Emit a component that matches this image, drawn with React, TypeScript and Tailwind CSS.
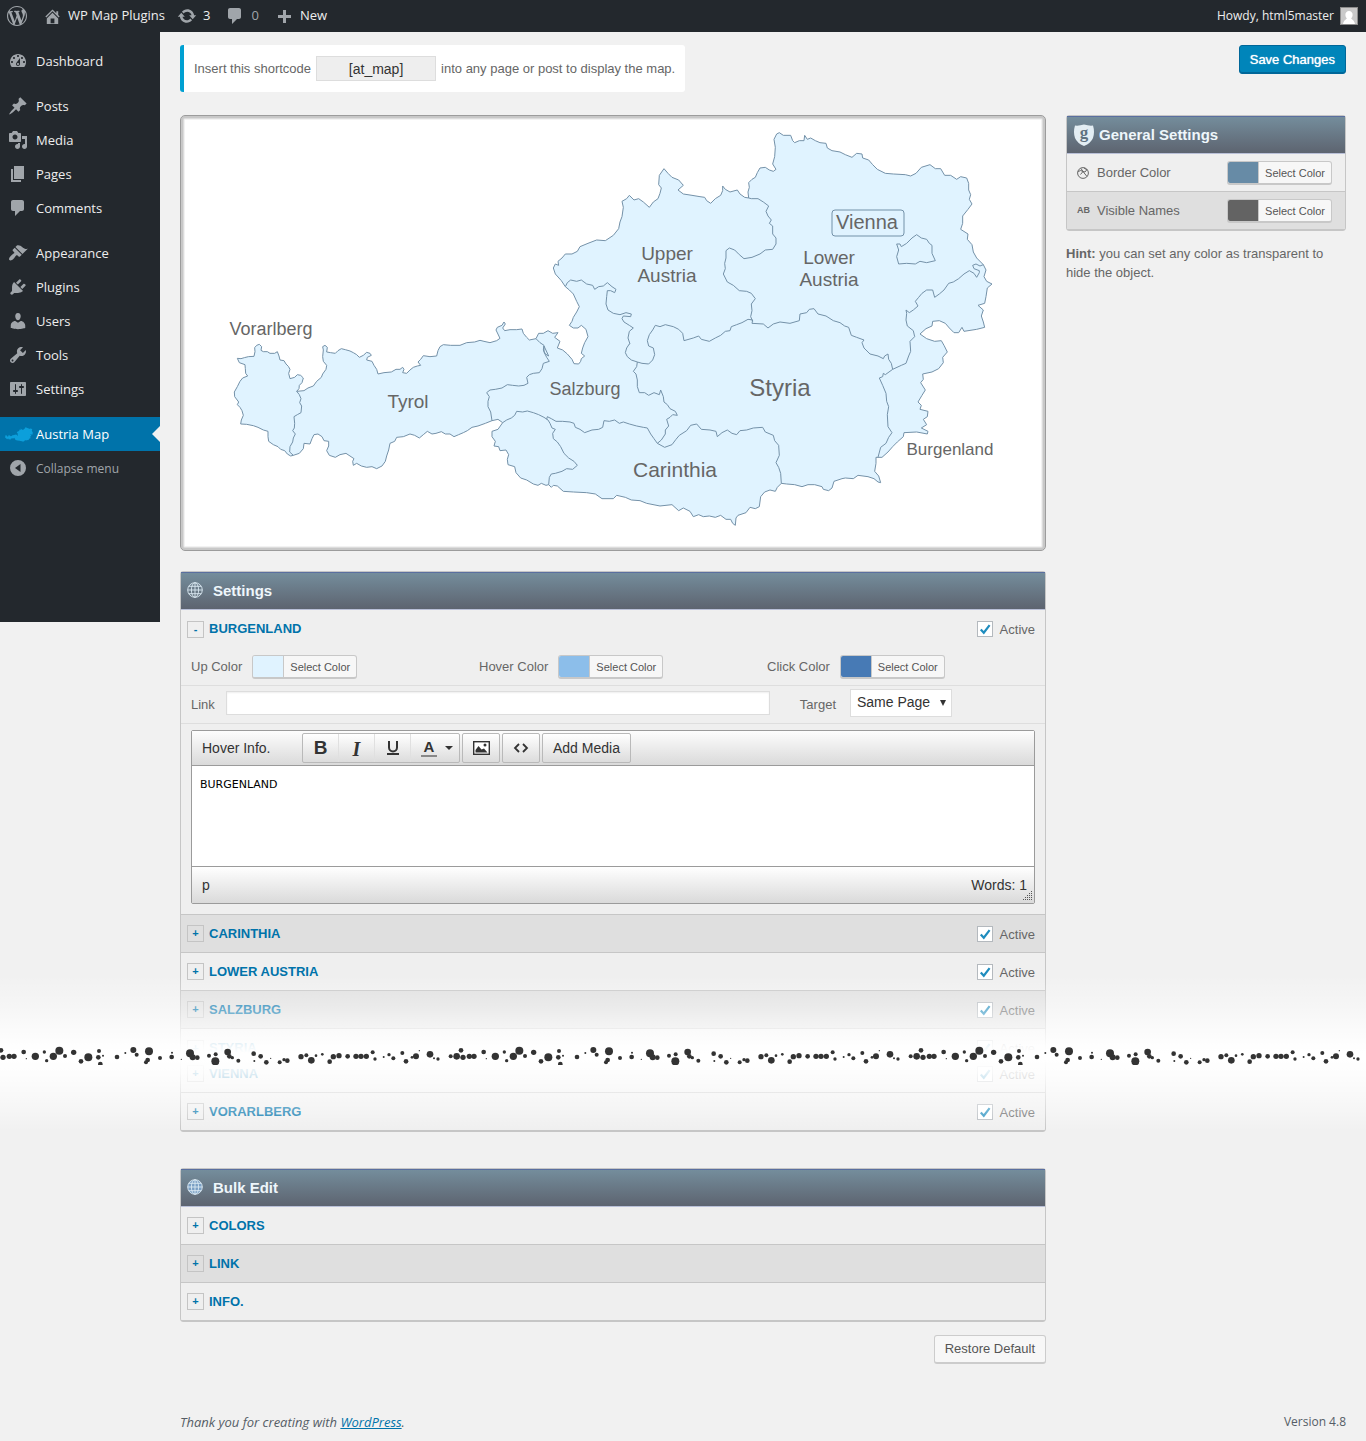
import type { ReactNode } from 'react';

const sans = 'font-["Liberation_Sans",Arial,sans-serif]';

type Point = [number, number];

// outline data is split in tiles, every tile has its own origin (units are 1/3 px)
const tile = (dx: number, dy: number, data: string): Point[] =>
	data.split(' ').map((pair) => {
		const [x, y] = pair.split(',').map(Number);
		return [x + dx, y + dy];
	});
const west = (data: string) => tile(0, 555, data);
const north = (data: string) => tile(900, 15, data);
const northEast = (data: string) => tile(1680, -15, data);
const south = (data: string) => tile(870, 675, data);
const southEast = (data: string) => tile(1680, 555, data);
const toPoints = (points: Point[]) => points.map((p) => p.join(',')).join(' ');

const outline = toPoints([
	...west(
		'172,175 183,176 193,173 205,170 222,169 225,155 224,143 230,136 238,133 245,140 243,151 250,155 262,155 270,160 284,160 292,155 297,168 300,180 312,182 318,192 325,199 330,208 326,220 330,236 344,232 352,224 362,226 370,234 366,248 358,256 357,266 350,274'
	),
	...west(
		'372,272 384,264 400,258 410,244 424,232 428,222 438,208 440,196 430,184 428,170 430,150 428,140 435,136 442,142 440,156 452,158 466,160 474,152 484,146 496,149 510,153 520,158 530,164 538,172 550,166 560,157 570,160 574,166 562,172 560,180 576,184 582,196 590,208 594,222 612,218 634,216 648,208 660,208 668,202 672,208 668,218 680,220 690,210 700,202 712,198 722,196 714,186 722,178 730,167 750,170 770,168 774,152 780,140 790,134 812,136 840,136 860,128 884,126 900,121 912,124 930,128 950,122'
	),
	...north('60,655 48,630 52,622 66,616 72,606 76,612 68,624 74,632 90,629 110,629 126,627 130,640 140,652 148,660 168,656'),
	...north(
		'176,640 190,640 204,632 218,640 234,638 224,652 240,664 232,684 248,690 262,702 276,718 282,731 296,732 302,724 304,716 314,708 304,700 308,684 314,668 324,650 318,628 304,616 294,624 280,624 268,616 276,604 280,592 290,576 298,560 290,544 280,522 268,510 256,500'
	),
	...north(
		'244,482 226,462 220,444 226,432 236,436 234,424 246,414 256,402 276,402 292,394 300,380 324,370 350,360 376,362 400,346 416,326 420,306 426,290 430,262 426,244 440,236 448,226 462,240 476,236 490,246 508,262 520,246 534,236 540,220 544,204 536,194 538,166 552,146 564,160 576,172 596,180 610,196 594,210 610,222 636,226 660,230 674,232 680,242 692,250 706,236 722,226 728,212 728,198 736,208 750,216 772,210 780,222 794,232 806,234'
	),
	...northEast(
		'24,246 28,232 26,218 36,208 46,202 52,188 60,174 76,172 88,180 100,184 108,178 98,162 104,140 106,112 102,88 110,72 118,68 130,76 152,76 158,92 164,98 178,92 192,92 194,76 202,88 212,84 226,92 240,98 258,100 262,114 276,122 300,126 316,134 336,142 350,130 366,132 368,144 386,150 398,164 412,178 436,190 460,192 496,194 512,198 528,190 544,172 570,164 586,176 602,176 614,196 632,196 650,208 662,200 680,204 686,220 686,240 692,254 688,268 696,282 684,298 668,318 668,340 662,358 684,372 682,388 696,404 700,426 710,444 730,464'
	),
	...northEast(
		'738,480 732,500 740,514 756,522 742,534 738,560 734,580 714,586 730,600 724,618 730,636 734,652 710,658 672,664 666,652 656,668 642,668 628,654 616,640 598,632 578,634 576,648 558,656 540,672'
	),
	...southEast(
		'560,116 584,124 604,122 612,136 622,156 608,172 610,188 596,206 576,216 548,222 550,238 542,248 556,270 546,286 534,306 544,316 540,328 564,334 562,350 550,358 560,374 544,384 564,394 562,402 530,396 492,398 490,410 472,426 458,440 444,456 426,472 408,472'
	),
	...southEast(
		'408,490 404,514 416,528 422,548 414,546 402,536 384,530 354,526 340,536 316,534 306,536 282,544 276,564 266,572 250,568 246,560 224,554 204,554 186,560 164,554 140,552 124,550 112,562 106,574 90,570 74,576 62,590 58,620 46,626 30,622 18,638'
	),
	...south(
		'804,526 798,534 796,556 788,550 782,538 768,538 752,526 736,532 718,528 700,530 686,524 670,530 660,514 640,504 626,512 606,494 570,498 530,490 510,482 484,480 466,472 440,466 430,476 396,476 376,462 350,458 310,456 280,454 262,438 250,436 244,442 236,434'
	),
	...south(
		'228,436 214,430 204,436 190,432 170,420 152,414 138,398 134,380 114,374 112,358 116,344 108,330 90,332 86,320 72,318 76,304 66,290 66,274 84,268 98,248 84,238 66,242'
	),
	...west(
		'916,370 894,378 876,382 862,392 850,398 836,404 822,410 810,402 796,402 784,395 768,400 756,402 742,394 730,404 718,414 704,406 690,402 670,410 650,412 644,424 630,430 626,450 620,468 616,484 606,498 590,506 576,500 560,502 544,498 530,490 520,496 518,484 522,476 510,468 498,460 480,464 466,472 448,466 440,452 446,438 446,424 432,422 426,410 414,402 402,404 396,416 390,432 372,430 370,446 358,460 340,466'
	),
	...west(
		'332,468 322,462 314,452 302,448 294,440 280,434 266,424 264,410 264,394 250,390 234,382 220,377 200,373 182,372 184,360 190,346 186,332 180,322 172,314 176,306 164,290 163,276 172,260 180,244 188,234 203,228 197,220 196,206 195,194 178,188'
	),
]);

const borders = [
	// Vorarlberg / Tyrol
	west('350,274 358,284 363,296 359,308 365,318 363,338 352,344 342,350 344,370 343,384 338,392 346,402 340,414 338,426 330,440 329,456 340,466'),
	// Tyrol / Salzburg
	[
		...north('168,656 180,668 192,676 190,690 196,702 206,708'),
		...south('222,18 222,36 230,52 238,64 220,70 216,86 208,98 190,100 178,104 170,112 174,130 162,136 146,138 128,136 112,134 96,144 76,148 60,150 50,158 58,170 54,184 54,200 62,216 66,242'),
	],
	// East Tyrol
	south('98,248 110,240 124,234 134,226 140,214 158,216 172,213 190,218 206,224 222,232 234,240 240,250 246,264 256,268 248,280 250,296 262,306 272,320 282,340 296,354 312,364 322,376 308,388 290,386 276,394 256,400 244,402 238,412 236,434'),
	// Salzburg / Carinthia
	south('230,238 232,230 244,236 258,244 278,244 300,246 312,250 316,262 330,268 344,278 366,270 386,268 398,262 402,242 418,244 434,240 448,250 460,246 478,252 500,258 520,262 532,264 542,282 552,296 562,310'),
	// Salzburg / Styria
	south('562,310 574,300 586,282 586,270 596,258 590,238 600,232 608,224 622,226 616,214 600,206 592,194 582,186 580,170 572,150 568,164 552,158 536,166 524,158 508,158 502,140 502,120 498,102 490,94 500,80 502,66'),
	// Salzburg / Upper Austria
	[
		...south('502,66 484,60 472,50 466,38 470,24 478,12'),
		...north('450,672 444,654 448,634 460,624 448,616 432,606 426,596 430,588 452,590 454,582 438,578 420,584 400,580 384,570 378,552 380,530 382,512 392,512 404,518 408,508 396,500 382,488 370,498 356,500 344,508 338,496 320,492 304,480 290,484 272,480 262,488 256,500'),
	],
	// Upper / Lower Austria
	north('806,234 814,236 834,236 850,246 866,258 858,274 864,288 874,300 868,310 878,318 878,342 888,354 888,372 878,388 856,390 840,402 816,412 792,416 778,404 764,390 748,384 738,392 738,414 734,430 736,446 730,462 742,486 760,496 778,512 800,514 814,520 826,536 814,552 816,572 812,590 818,604'),
	// Upper Austria / Styria
	[
		...north('818,600 804,598 786,608 770,614 754,620 750,632 736,634 722,646 706,654 688,664 664,658 656,648 640,654 612,662 608,640 596,628 580,620 556,614 540,620 526,616 518,630 508,644 502,662 506,678 520,684'),
		...south('554,44 548,60 536,72 516,70 502,66'),
	],
	// Styria / Lower Austria
	southEast('38,60 36,70 70,72 84,84 100,72 120,66 150,70 178,62 180,42 200,38 208,28 222,26 234,42 258,48 280,62 300,68 314,78 326,82 334,106 350,112 372,120 366,128 372,144 390,162 414,168 430,176 434,168 444,162 446,178 454,190 458,208'),
	// Lower Austria / Burgenland
	[
		...northEast('730,464 720,468 708,462 698,466 702,476 718,482 718,488 710,502 702,490 688,482 672,492 656,506 640,516 626,520 612,540 598,552 584,562 578,540 560,540 546,550 536,562 526,574 534,588 520,600 508,608 498,600'),
		...southEast('500,40 498,60 502,78 520,92 524,110 510,124 512,154 506,168 498,190 484,196 458,208'),
	],
	// Burgenland / Styria
	southEast('458,208 436,224 430,220 428,230 418,234 428,256 438,280 440,304 446,320 442,344 444,380 456,398 446,412 438,430 422,442 414,472'),
	// Styria / Carinthia
	[
		...southEast('124,550 122,520 116,502 108,488 118,466 116,436 104,422 100,406 76,396 68,382 40,384 20,390 0,392'),
		...south('800,284 786,280 772,270 756,278 742,290 738,274 720,270 694,268 680,252 662,256 650,272 628,286 618,298 606,314 584,322 562,310'),
	],
	// Vienna
	northEast('484,410 500,400 516,384 530,374 544,384 560,388 568,400 576,406 576,430 586,452 560,458 540,454 526,462 500,460 476,462 470,440 476,420 470,402 480,402 484,410'),
].map(toPoints);

// x, y, radius (1/3 px)
const dots = [
	[3, 16, 7], [9, 37, 8], [28, 34, 8], [42, 34, 8], [71, 21, 7], [79, 41, 2], [106, 34, 11], [133, 21, 5],
	[140, 47, 5], [160, 34, 11], [178, 17, 12], [195, 33, 6], [221, 22, 8], [243, 49, 7], [265, 37, 12],
	[297, 18, 6], [295, 37, 7], [301, 57, 7], [309, 32, 3], [351, 36, 7], [376, 24, 3], [400, 15, 9],
	[410, 29, 6], [447, 19, 12], [443, 45, 7], [438, 52, 6], [480, 39, 6], [515, 36, 7], [516, 23, 3],
	[544, 43, 2], [570, 25, 12], [578, 37, 9], [592, 38, 7], [627, 32, 6], [647, 28, 6], [646, 49, 12],
	[683, 21, 10], [688, 34, 7], [697, 38, 5], [715, 47, 6], [761, 26, 7], [763, 48, 3], [782, 34, 7],
	[799, 52, 7], [812, 40, 2], [839, 52, 6], [852, 44, 5], [862, 47, 7], [903, 35, 8], [919, 31, 6],
	[934, 46, 10], [948, 32, 4], [967, 28, 4], [989, 50, 7], [1000, 35, 8], [1017, 32, 8], [1043, 34, 7],
	[1068, 34, 8], [1083, 34, 8], [1099, 34, 8], [1118, 22, 6], [1125, 42, 5], [1151, 36, 3], [1167, 29, 5],
	[1180, 40, 6], [1207, 24, 6], [1218, 49, 7], [1236, 37, 4], [1248, 34, 9], [1258, 17, 2], [1290, 28, 10],
	[1302, 40, 3], [1314, 42, 5], [1352, 34, 6], [1370, 34, 10],
];

const icons = {
	wordpress:
		'M20 10c0-5.51-4.49-10-10-10C4.48 0 0 4.49 0 10c0 5.52 4.48 10 10 10 5.51 0 10-4.48 10-10zM7.78 15.37L4.37 6.22c.55-.02 1.17-.08 1.17-.08.5-.06.44-1.13-.06-1.11 0 0-1.45.11-2.37.11-.18 0-.37 0-.58-.01C4.12 2.69 6.87 1.11 10 1.11c2.33 0 4.45.87 6.05 2.34-.68-.11-1.65.39-1.65 1.58 0 .74.45 1.36.9 2.1.35.61.55 1.36.55 2.46 0 1.49-1.4 5-1.4 5l-3.03-8.37c.54-.02.82-.17.82-.17.5-.05.44-1.25-.06-1.22 0 0-1.44.12-2.38.12-.87 0-2.33-.12-2.33-.12-.5-.03-.56 1.2-.06 1.22l.92.08 1.26 3.41zM17.41 10c.24-.64.74-1.87.43-4.25.7 1.29 1.05 2.71 1.05 4.25 0 3.29-1.73 6.24-4.4 7.78.97-2.59 1.94-5.2 2.92-7.78zM6.1 18.09C3.12 16.65 1.11 13.53 1.11 10c0-1.3.23-2.48.72-3.59C3.25 10.3 4.67 14.2 6.1 18.09zm4.03-6.63l2.58 6.98c-.86.29-1.76.45-2.71.45-.79 0-1.57-.11-2.29-.33.81-2.38 1.62-4.74 2.42-7.1z',
	home: 'M16 8.5l1.53 1.53-1.06 1.06L10 4.6l-6.47 6.49-1.06-1.06L10 2.5l4 4v-2h2v4zm-6-2.46l6 5.99V18H4v-5.97zM12 17v-5H8v5h4z',
	update:
		'M10.2 3.28c3.53 0 6.43 2.61 6.92 6h2.08l-3.5 4-3.5-4h2.32c-.45-1.97-2.21-3.45-4.32-3.45-1.45 0-2.73.71-3.54 1.78L4.95 5.66C6.23 4.2 8.11 3.28 10.2 3.28zm-.4 13.44c-3.52 0-6.43-2.61-6.92-6H.8l3.5-4c1.17 1.33 2.33 2.67 3.5 4H5.48c.45 1.97 2.21 3.45 4.32 3.45 1.45 0 2.73-.71 3.54-1.78l1.71 1.95c-1.28 1.46-3.15 2.38-5.25 2.38z',
	plus: 'M17 9v3h-5v5H9v-5H4V9h5V4h3v5h5z',
	dashboard:
		'M3.76 16h12.48c1.1-1.37 1.76-3.11 1.76-5 0-4.42-3.58-8-8-8s-8 3.58-8 8c0 1.89.66 3.63 1.76 5zM10 4c.55 0 1 .45 1 1s-.45 1-1 1-1-.45-1-1 .45-1 1-1zM6 6c.55 0 1 .45 1 1s-.45 1-1 1-1-.45-1-1 .45-1 1-1zm8 0c.55 0 1 .45 1 1s-.45 1-1 1-1-.45-1-1 .45-1 1-1zm-5.37 5.55L12 7v6c0 1.1-.9 2-2 2s-2-.9-2-2c0-.57.24-1.08.63-1.45zM4 10c.55 0 1 .45 1 1s-.45 1-1 1-1-.45-1-1 .45-1 1-1zm12 0c.55 0 1 .45 1 1s-.45 1-1 1-1-.45-1-1 .45-1 1-1zm-5 3c0-.55-.45-1-1-1s-1 .45-1 1 .45 1 1 1 1-.45 1-1z',
	post: 'M10.44 3.02l1.82-1.82 6.36 6.35-1.83 1.82c-1.05-.68-2.48-.57-3.41.36l-.75.75c-.92.93-1.04 2.35-.35 3.41l-1.83 1.82-2.41-2.41-2.8 2.79c-.42.42-3.38 2.71-3.8 2.29s1.86-3.39 2.28-3.81l2.79-2.79L4.1 9.36l1.83-1.82c1.05.69 2.48.57 3.4-.36l.75-.75c.93-.92 1.05-2.35.36-3.41z',
	media:
		'M13 11V4c0-.55-.45-1-1-1h-1.67L9 1H5L3.67 3H2c-.55 0-1 .45-1 1v7c0 .55.45 1 1 1h10c.55 0 1-.45 1-1zM7 4.5c1.38 0 2.5 1.12 2.5 2.5S8.38 9.5 7 9.5 4.5 8.38 4.5 7 5.62 4.5 7 4.5zM14 6h5v10.5c0 1.38-1.12 2.5-2.5 2.5S14 17.88 14 16.5s1.12-2.5 2.5-2.5c.17 0 .34.02.5.05V9h-3V6zm-4 8.05V13h2v3.5c0 1.38-1.12 2.5-2.5 2.5S7 17.88 7 16.5 8.12 14 9.5 14c.17 0 .34.02.5.05z',
	page: 'M6 15V2h10v13H6zm-1 1h8v2H3V5h2v11z',
	comments: 'M5 2h9c1.1 0 2 .9 2 2v7c0 1.1-.9 2-2 2h-2l-5 5v-5H5c-1.1 0-2-.9-2-2V4c0-1.1.9-2 2-2z',
	appearance:
		'M14.48 11.06L7.41 3.99l1.5-1.5c.5-.56 2.3-.47 3.51.32 1.21.8 1.43 1.28 2.91 2.1 1.18.64 2.45 1.26 4.45.85zm-.71.71L6.7 4.7 4.93 6.47c-.39.39-.39 1.02 0 1.41l1.06 1.06c.39.39.39 1.03 0 1.42-.6.6-1.43 1.11-2.21 1.69-.35.26-.7.53-1.01.84C1.43 14.23.4 16.08 1.4 17.07c.99 1 2.84-.03 4.18-1.36.31-.31.58-.66.85-1.02.57-.78 1.08-1.61 1.69-2.21.39-.39 1.02-.39 1.41 0l1.06 1.06c.39.39 1.02.39 1.41 0z',
	plugins:
		'M13.11 4.36L9.87 7.6 8 5.73l3.24-3.24c.35-.34 1.05-.2 1.56.32.52.51.66 1.21.31 1.55zm-8 1.77l.91-1.12 9.01 9.01-1.19.84c-.71.71-2.63 1.16-3.82 1.16H6.14L4.9 17.26c-.59.59-1.54.59-2.12 0-.59-.58-.59-1.53 0-2.12l1.24-1.24v-3.88c0-1.13.4-3.19 1.09-3.89zm7.26 3.97l3.24-3.24c.34-.35 1.04-.21 1.55.31.52.51.66 1.21.31 1.55l-3.24 3.25z',
	users:
		'M10 9.25c-2.27 0-2.73-3.44-2.73-3.44C7 4.02 7.82 2 9.97 2c2.16 0 2.98 2.02 2.71 3.81 0 0-.41 3.44-2.68 3.44zm0 2.57L12.72 10c2.39 0 4.52 2.33 4.52 4.53v2.49s-3.65 1.13-7.24 1.13c-3.65 0-7.24-1.13-7.24-1.13v-2.49c0-2.25 1.94-4.48 4.47-4.48z',
	tools: 'M16.68 9.77c-1.34 1.34-3.3 1.67-4.95.99l-5.41 6.52c-.99.99-2.59.99-3.58 0s-.99-2.59 0-3.57l6.52-5.42c-.68-1.65-.35-3.61.99-4.95 1.28-1.28 3.12-1.62 4.72-1.06l-2.89 2.89 2.82 2.82 2.86-2.87c.53 1.58.18 3.39-1.08 4.65zM3.81 16.21c.4.39 1.04.39 1.43 0 .4-.4.4-1.04 0-1.43-.39-.4-1.03-.4-1.43 0-.39.39-.39 1.03 0 1.43z',
	settings:
		'M18 16V4c0-.55-.45-1-1-1H3c-.55 0-1 .45-1 1v12c0 .55.45 1 1 1h14c.55 0 1-.45 1-1zM8 11h1c.55 0 1 .45 1 1s-.45 1-1 1H8v1.5c0 .28-.22.5-.5.5s-.5-.22-.5-.5V13H6c-.55 0-1-.45-1-1s.45-1 1-1h1V5.5c0-.28.22-.5.5-.5s.5.22.5.5V11zm5-2h-1c-.55 0-1-.45-1-1s.45-1 1-1h1V5.5c0-.28.22-.5.5-.5s.5.22.5.5V7h1c.55 0 1 .45 1 1s-.45 1-1 1h-1v5.5c0 .28-.22.5-.5.5s-.5-.22-.5-.5V9z',
	collapse: 'M10 2a8 8 0 1 0 0 16 8 8 0 0 0 0-16zm2.5 4v8L7 10z',
};

type IconName = keyof typeof icons;

const Icon = ({ name, className = 'size-5 text-[#a0a5aa]' }: { name: IconName; className?: string }) => (
	<svg viewBox="0 0 20 20" className={className} fill="currentColor" fillRule="evenodd" aria-hidden="true">
		<path d={icons[name]} />
	</svg>
);

const menu: { label: string; icon: IconName }[][] = [
	[{ label: 'Dashboard', icon: 'dashboard' }],
	[
		{ label: 'Posts', icon: 'post' },
		{ label: 'Media', icon: 'media' },
		{ label: 'Pages', icon: 'page' },
		{ label: 'Comments', icon: 'comments' },
	],
	[
		{ label: 'Appearance', icon: 'appearance' },
		{ label: 'Plugins', icon: 'plugins' },
		{ label: 'Users', icon: 'users' },
		{ label: 'Tools', icon: 'tools' },
		{ label: 'Settings', icon: 'settings' },
	],
];

const AdminBar = () => (
	<header className="flex h-8 items-center justify-between bg-[#23282d] pr-2 pl-[7px] text-[13px] text-[#eee]">
		<nav className="flex items-center">
			<a href="#wp" aria-label="About WordPress" className="mr-4">
				<Icon name="wordpress" />
			</a>
			<a href="#site" className="mr-3 flex items-center gap-[6px]">
				<Icon name="home" className="size-[19px] text-[#a0a5aa]" />
				WP Map Plugins
			</a>
			<a href="#updates" className="mr-[15px] flex items-center gap-[6px]">
				<Icon name="update" />3
			</a>
			<a href="#comments" className="mr-[15px] flex items-center gap-[6px] text-[#a0a5aa]">
				<Icon name="comments" />0
			</a>
			<a href="#new" className="flex items-center gap-[6px]">
				<Icon name="plus" />
				New
			</a>
		</nav>
		<a href="#profile" className="flex items-center gap-[6px] text-[12px]">
			Howdy, html5master
			<svg viewBox="0 0 18 18" className="size-[18px]" aria-hidden="true">
				<rect width="18" height="18" fill="#8c8c8c" />
				<rect x="1" y="1" width="16" height="16" fill="#c9c9c9" />
				<path d="M9 4a3.6 3.6 0 0 1 3.6 4c0 1.6-.8 2.6-1.4 3.2 0 1.2 3 1.4 3.8 5.800H3c.8-4.400 3.800-4.600 3.800-5.800C6.200 10.600 5.400 9.600 5.400 8A3.600 3.600 0 0 1 9 4z" fill="#fff" />
			</svg>
		</a>
	</header>
);

const Sidebar = () => (
	<nav className="min-h-[590px] w-40 shrink-0 self-start bg-[#23282d] pt-3 text-[13px] text-[#eee]">
		{menu.map((group) => (
			<ul key={group[0].label} className="mb-[11px]">
				{group.map(({ label, icon }) => (
					<li key={label}>
						<a href={`#${label}`} className="flex h-[34px] items-center gap-2 pl-2">
							<Icon name={icon} />
							<span className="pt-[2px]">{label}</span>
						</a>
					</li>
				))}
			</ul>
		))}
		<a href="#map" className="relative flex h-[34px] items-center gap-[3px] bg-[#0073aa] pl-[5px] text-white">
			<svg viewBox="160 40 2280 1200" className="h-[15px] w-7" aria-hidden="true">
				<polygon points={outline} fill="#0c9fdb" />
			</svg>
			<span className="pt-[2px]">Austria Map</span>
			<span className="absolute top-[9px] right-0 border-y-8 border-r-8 border-y-transparent border-r-[#f1f1f1]" />
		</a>
		<button type="button" className="flex h-[34px] w-full items-center gap-2 pl-2 text-[12px] text-[#a0a5aa]">
			<Icon name="collapse" />
			<span className="pt-[2px]">Collapse menu</span>
		</button>
	</nav>
);

const AustriaMap = () => (
	<div className="mb-5 rounded-[5px] border border-[#9c9c9c] bg-white shadow-[inset_0_0_0_2px_#c8c8c8,inset_0_0_0_3px_#dcdcdc,inset_0_0_0_4px_#f2f2f2]">
		<svg viewBox="1 1 864 434" className={`block w-full ${sans}`} fill="#666">
			<g transform="scale(0.33333)" stroke="#7391a8" strokeWidth="3" strokeLinejoin="round" fill="none">
				<polygon points={outline} fill="#e0f3ff" />
				{borders.map((points) => (
					<polyline key={points} points={points} />
				))}
			</g>
			<rect x="652" y="95" width="72" height="26" rx="3" fill="none" stroke="#7391a8" />
			<g textAnchor="middle" fontSize="18">
				<text x="91" y="220">Vorarlberg</text>
				<text x="228" y="293" fontSize="19">Tyrol</text>
				<text x="405" y="280">Salzburg</text>
				<text x="487" y="145" fontSize="19">Upper</text>
				<text x="487" y="167" fontSize="19">Austria</text>
				<text x="649" y="149" fontSize="19">Lower</text>
				<text x="649" y="171" fontSize="19">Austria</text>
				<text x="687" y="114" fontSize="20">Vienna</text>
				<text x="600" y="281" fontSize="24">Styria</text>
				<text x="495" y="362" fontSize="21">Carinthia</text>
				<text x="770" y="340" fontSize="17">Burgenland</text>
			</g>
		</svg>
	</div>
);

const Panel = ({ title, icon, children }: { title: string; icon: ReactNode; children: ReactNode }) => (
	<section className="rounded-[3px] border border-[#c6c6c6] bg-[#efefef]">
		<h2 className="flex h-[38px] items-center border-t border-b border-t-[#5a6f9f] border-b-[#b9c0d8] bg-linear-to-b from-[#748d9c] to-[#5d6470] pl-[6px] text-[15px] font-bold text-[#eef6fb]">
			{icon}
			{title}
		</h2>
		{children}
	</section>
);

const Globe = ({ fill = 'none' }: { fill?: string }) => (
	<svg viewBox="0 0 16 16" className="mr-[10px] mb-[2px] size-4" fill="none" stroke="#dbeaf3" strokeWidth="0.900" aria-hidden="true">
		<circle cx="8" cy="8" r="7.300" fill={fill} />
		<ellipse cx="8" cy="8" rx="3.600" ry="7.300" />
		<path d="M8 .7v14.600M.7 8h14.600M1.800 4.300h12.400M1.800 11.700h12.400" />
	</svg>
);

const ColorButton = ({ color }: { color: string }) => (
	<button type="button" className="flex h-6 rounded-[3px] border border-b-2 border-[#c8c8c8] bg-[#f7f7f7] text-[11px] leading-[22px] text-[#555]">
		<span className="h-full w-[31px] rounded-l-[2px] border-r border-[#c8c8c8]" style={{ backgroundColor: color }} />
		<span className="px-[6px]">Select Color</span>
	</button>
);

const ActiveBox = () => (
	<label className="flex items-center gap-[7px] text-[13px] text-[#666]">
		<span className="grid size-4 place-items-center">
			<input type="checkbox" defaultChecked className="peer col-start-1 row-start-1 size-4 appearance-none border border-[#b4b9be] bg-white" />
			<svg viewBox="0 0 16 16" className="pointer-events-none invisible col-start-1 row-start-1 size-4 peer-checked:visible" aria-hidden="true">
				<path d="M3.800 8.400 6.800 11.700 12.600 4.200" fill="none" stroke="#1e8cbe" strokeWidth="2.200" />
			</svg>
		</span>
		<span className="pt-[2px]">Active</span>
	</label>
);

type RowProps = { name: string; open?: boolean; active?: boolean; className?: string };

const Row = ({ name, open = false, active = true, className = '' }: RowProps) => (
	<div className={`flex h-[38px] items-center justify-between pr-[10px] pl-[6px] ${className}`}>
		<button type="button" aria-expanded={open} className="flex items-center gap-[5px] text-[13px] font-bold text-[#0073aa]">
			<span className="flex size-[17px] items-center justify-center border border-[#c4c4c4] text-[11px]">{open ? '-' : '+'}</span>
			{name}
		</button>
		{active && <ActiveBox />}
	</div>
);

const line = 'border-b border-[#c6c6c6]';

const toolClass = 'flex h-[30px] items-center justify-center rounded-[2px] border border-[#b9b9b9] bg-linear-to-b from-white to-[#dcdcdc]';

const Editor = () => (
	<div className="mx-[10px] mt-[6px] mb-[10px] rounded-[2px] border border-[#9b9b9b] text-[14px] text-[#333]">
		<div className="flex h-[35px] items-center gap-[2px] border-b border-[#9b9b9b] bg-linear-to-b from-[#fdfdfd] to-[#dadada] pl-[10px]">
			<label htmlFor="hover-info" className="w-[98px]">
				Hover Info.
			</label>
			<div className="flex h-[30px] rounded-[2px] border border-[#b9b9b9] bg-linear-to-b from-white to-[#dcdcdc] text-[19px]">
				<button type="button" className="w-9 border-r border-[#e0e0e0] font-bold">B</button>
				<button type="button" className='w-9 border-r border-[#e0e0e0] font-["Liberation_Serif",serif] text-[20px] font-bold italic'>I</button>
				<button type="button" className="flex w-9 items-center justify-center border-r border-[#e0e0e0]" aria-label="Underline">
					<svg viewBox="0 0 14 16" className="h-4 w-[14px]" fill="none" stroke="#333" strokeWidth="2" aria-hidden="true">
						<path d="M3 1v6.500a4 4 0 0 0 8 0V1M1 14h12" />
					</svg>
				</button>
				<button type="button" className="flex w-12 items-center justify-center gap-2 pl-1 text-[15px] font-bold" aria-label="Text color">
					<span className="border-b-2 border-[#888] px-[3px] leading-4">A</span>
					<span className="border-x-4 border-t-4 border-x-transparent border-t-[#333]" />
				</button>
			</div>
			<button type="button" className={`w-[38px] ${toolClass}`} aria-label="Insert image">
				<svg viewBox="0 0 17 14" className="h-[14px] w-[17px]" aria-hidden="true">
					<rect x="0.700" y="0.700" width="15.600" height="12.600" fill="#fff" stroke="#333" strokeWidth="1.400" />
					<path d="M2.500 11.500V9l3-4 3 3.500 2.500-1 3.500 4z" fill="#333" />
					<circle cx="12" cy="4" r="1.500" fill="#333" />
				</svg>
			</button>
			<button type="button" className={`w-[38px] ${toolClass}`} aria-label="Source code">
				<svg viewBox="0 0 16 10" className="h-[10px] w-4" fill="none" stroke="#333" strokeWidth="1.800" aria-hidden="true">
					<path d="M6 1 2 5l4 4M10 1l4 4-4 4" />
				</svg>
			</button>
			<button type="button" className={`px-[10px] ${toolClass}`}>Add Media</button>
		</div>
		<textarea
			id="hover-info"
			defaultValue="BURGENLAND"
			className='block h-[101px] w-full resize-none border-b border-[#9b9b9b] bg-white px-2 py-[11px] font-["DejaVu_Sans",sans-serif] text-[11px] leading-4 text-black'
		/>
		<div className="flex h-9 items-center justify-between bg-linear-to-b from-white to-[#dadada] pr-[2px] pl-[10px]">
			p
			<span className="flex h-full items-center">
				Words: 1
				<svg viewBox="0 0 9 9" className="mb-[3px] -ml-1 size-[9px] self-end" stroke="#555" strokeDasharray="1 1" aria-hidden="true">
					<path d="M8 .5h1M6 2.500h3M4 4.500h5M2 6.500h7M0 8.500h9" />
				</svg>
			</span>
		</div>
	</div>
);

// fades the rows out and draws the torn edge over them
const Tear = () => (
	<div className="relative h-0">
		<div className="pointer-events-none absolute -top-20 -left-[181px] h-[156px] w-screen bg-[linear-gradient(to_bottom,transparent,rgba(255,255,255,.4)_34px,rgba(255,255,255,.92)_70px,white_78px,white_84px,rgba(255,255,255,.88)_98px,rgba(255,255,255,.35)_136px,transparent)] pt-[70px]">
			<svg className="h-5 w-full" fill="#333" aria-hidden="true">
				<g transform="scale(0.33333)">
					{[0, 1380, 2760].map((shift) =>
						dots.map(([x, y, r]) => <circle key={`${shift}-${x}-${y}`} cx={x + shift} cy={y} r={r} />)
					)}
				</g>
			</svg>
		</div>
	</div>
);

const colors = [
	{ label: 'Up Color', color: '#e0f3ff' },
	{ label: 'Hover Color', color: '#8cbeea' },
	{ label: 'Click Color', color: '#477ab5' },
];

const RegionSettings = () => (
	<Panel title="Settings" icon={<Globe />}>
		<Row name="BURGENLAND" open />
		<div className="grid h-[38px] grid-cols-3 border-b border-[#dedede] text-[13px] text-[#666]">
			{colors.map(({ label, color }) => (
				<div key={label} className="flex items-center gap-[10px] pl-[10px]">
					{label}
					<ColorButton color={color} />
				</div>
			))}
		</div>
		<div className="flex h-[38px] items-center border-b border-[#dedede] px-[10px] text-[13px] text-[#666]">
			<label htmlFor="link" className="mr-[11px]">Link</label>
			<input id="link" type="text" className="mr-[30px] mb-1 h-6 min-w-0 flex-1 border border-[#ddd] bg-white px-2 shadow-[inset_0_1px_2px_rgba(0,0,0,.07)]" />
			<label htmlFor="target" className="mr-[14px]">Target</label>
			<span className="relative mr-[83px] mb-1">
				<select id="target" className="h-7 w-[102px] appearance-none border border-[#ddd] bg-white pl-[6px] text-[14px] text-[#333]">
					<option>Same Page</option>
					<option>New Page</option>
				</select>
				<span className="pointer-events-none absolute top-[11px] right-[6px] border-x-[3px] border-t-[6px] border-x-transparent border-t-[#333]" />
			</span>
		</div>
		<Editor />
		<Row name="CARINTHIA" className={`h-[39px] border-t border-t-[#c6c6c6] bg-[#dfdfdf] ${line}`} />
		<Row name="LOWER AUSTRIA" className={line} />
		<Row name="SALZBURG" className={`bg-[#dfdfdf] ${line}`} />
		<div className="h-[26px] overflow-hidden">
			<Row name="STYRIA" />
		</div>
		<Tear />
		<Row name="VIENNA" className={line} />
		<Row name="VORARLBERG" className={line} />
	</Panel>
);

const GeneralSettings = () => (
	<aside className="w-[280px] shrink-0 text-[13px] text-[#666]">
		<Panel
			title="General Settings"
			icon={
				<svg viewBox="0 0 22 22" className="mr-1 size-[22px]" aria-hidden="true">
					<path d="M2 1.500Q6 2 11 .5 16 2 20 1.500 22 8 20 14q-2 5-9 8-7-3-9-8Q0 8 2 1.500z" fill="#e3edf3" />
					<text x="11" y="14" textAnchor="middle" fontSize="17" fontWeight="bold" fill="#5f7280" className='font-["Liberation_Serif",serif]'>g</text>
				</svg>
			}
		>
			<div className={`flex h-[38px] items-center pr-[13px] pl-[10px] ${line}`}>
				<svg viewBox="0 0 12 12" className="mr-2 size-3" fill="none" stroke="#666" aria-hidden="true">
					<circle cx="6" cy="6" r="5.400" />
					<path d="M1 4.500q3-2 5 0t4-2M4 1.500l2 3-2.500 3M6 4.500l4 5M7 1l3 2" />
				</svg>
				<span className="flex-1">Border Color</span>
				<ColorButton color="#678ba6" />
			</div>
			<div className={`flex h-[38px] items-center bg-[#dfdfdf] pr-[13px] pl-[10px] ${line}`}>
				<span className="mr-2 w-3 text-[9px] font-bold" aria-hidden="true">AB</span>
				<span className="flex-1">Visible Names</span>
				<ColorButton color="#636363" />
			</div>
		</Panel>
		<p className="mt-[13px] leading-[19px]">
			<b>Hint:</b> you can set any color as transparent to hide the object.
		</p>
	</aside>
);

const App = () => (
	<div className='min-h-screen overflow-x-hidden bg-[#f1f1f1] font-["Open_Sans",sans-serif]'>
		<AdminBar />
		<div className="flex">
			<Sidebar />
			<main className="min-w-0 flex-1 px-5 pt-[13px] pb-[10px]">
				<div className={sans}>
					<div className="mb-[23px] flex items-start justify-between">
						<div className="flex h-[47px] items-center gap-[5px] rounded-[3px] border-l-4 border-[#00a0d2] bg-white px-[10px] text-[13px] text-[#666]">
							<label htmlFor="shortcode">Insert this shortcode</label>
							<input id="shortcode" type="text" readOnly value="[at_map]" className="h-[25px] w-[120px] border border-[#ddd] bg-[#eee] text-center text-[14px] text-[#333]" />
							into any page or post to display the map.
						</div>
						<button type="button" className="h-[29px] rounded-[3px] border border-[#006799] bg-[#0085ba] px-[10px] text-[13px] text-white shadow-[inset_0_-1px_0_#006799] [text-shadow:0_0_1px_#fff]">
							Save Changes
						</button>
					</div>
					<div className="flex gap-5">
						<div className="min-w-0 flex-1">
							<AustriaMap />
							<RegionSettings />
							<div className="mt-9">
								<Panel title="Bulk Edit" icon={<Globe fill="#7a9fc4" />}>
									<Row name="COLORS" active={false} className={line} />
									<Row name="LINK" active={false} className={`bg-[#dfdfdf] ${line}`} />
									<Row name="INFO." active={false} className={line} />
								</Panel>
							</div>
							<div className="mt-[13px] flex justify-end">
								<button type="button" className="h-[29px] rounded-[3px] border border-b-2 border-[#ccc] bg-[#f7f7f7] px-[10px] text-[13px] text-[#555]">
									Restore Default
								</button>
							</div>
						</div>
						<GeneralSettings />
					</div>
				</div>
				<footer className="mt-12 flex justify-between text-[12px] leading-5 text-[#555d66]">
					<p className="text-[13px] italic">
						Thank you for creating with <a href="#wordpress" className="text-[#0073aa] underline">WordPress</a>.
					</p>
					<p>Version 4.8</p>
				</footer>
			</main>
		</div>
	</div>
);

export default App;
